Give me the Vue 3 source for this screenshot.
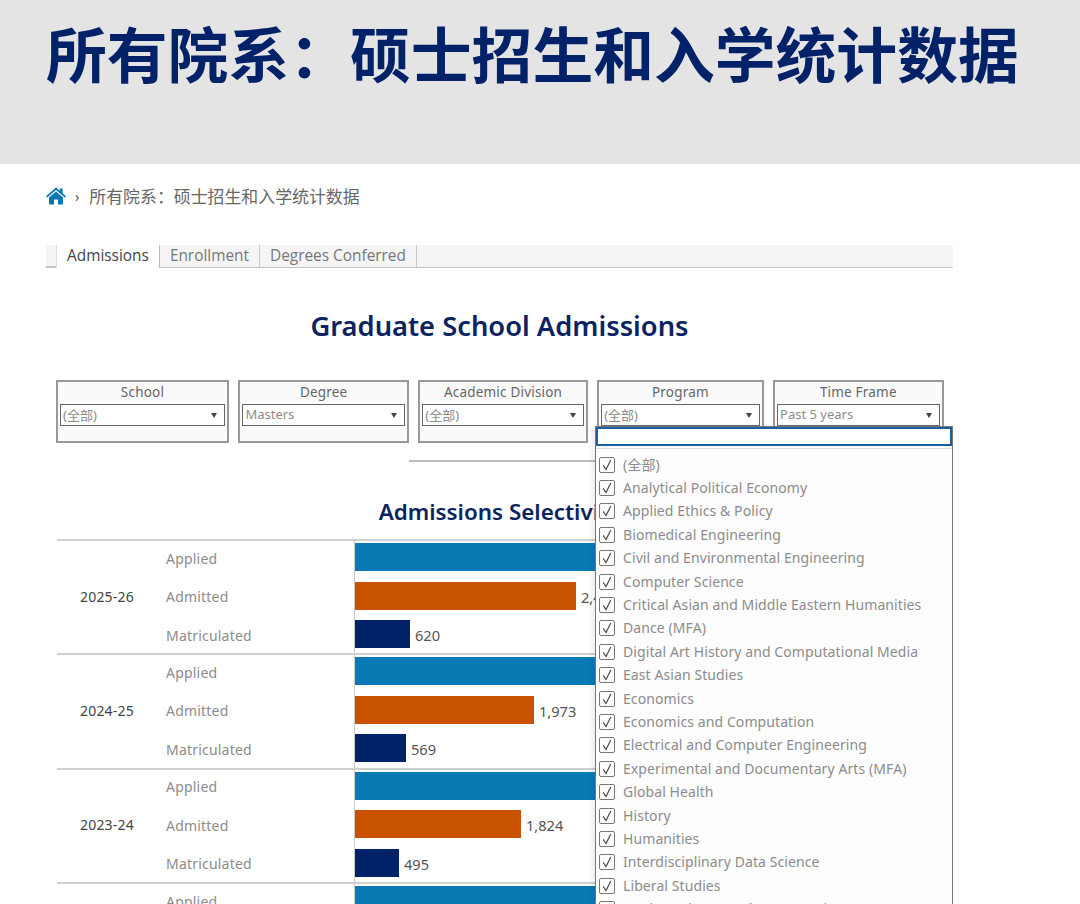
<script setup>
const filters = [
  { label: 'School', value: '(全部)', width: 173 },
  { label: 'Degree', value: 'Masters', width: 170.5 },
  { label: 'Academic Division', value: '(全部)', width: 169.5 },
  { label: 'Program', value: '(全部)', width: 166.5 },
  { label: 'Time Frame', value: 'Past 5 years', width: 170.5 }
]
const years = [
  { year: '2025-26', admitted: 221, admittedLabel: '2,450', mat: 55, matLabel: '620' },
  { year: '2024-25', admitted: 179, admittedLabel: '1,973', mat: 51, matLabel: '569' },
  { year: '2023-24', admitted: 166, admittedLabel: '1,824', mat: 44, matLabel: '495' },
  { year: '2022-23', admitted: 170, admittedLabel: '1,870', mat: 48, matLabel: '530' }
]
const programs = [
  '(全部)', 'Analytical Political Economy', 'Applied Ethics & Policy', 'Biomedical Engineering',
  'Civil and Environmental Engineering', 'Computer Science', 'Critical Asian and Middle Eastern Humanities',
  'Dance (MFA)', 'Digital Art History and Computational Media', 'East Asian Studies', 'Economics',
  'Economics and Computation', 'Electrical and Computer Engineering', 'Experimental and Documentary Arts (MFA)',
  'Global Health', 'History', 'Humanities', 'Interdisciplinary Data Science', 'Liberal Studies',
  'Marine Science and Conservation'
]
</script>

<template>
  <div class="page">
    <header class="hero">
      <h1>所有院系：硕士招生和入学统计数据</h1>
    </header>

    <nav class="crumbs">
      <svg class="home" viewBox="0 0 20 18" width="20" height="18">
        <path fill="#0577b1" d="M10 .6 0 9.2l1.2 1.4L10 3l8.8 7.6L20 9.2l-3.4-2.9V1.4h-2.8v2.5z" />
        <path fill="#0577b1" d="M10 4.6 3 10.6v6.8h5v-5h4v5h5v-6.8z" />
      </svg>
      <span class="sep">›</span>
      <span class="crumb">所有院系：硕士招生和入学统计数据</span>
    </nav>

    <main class="dash">
      <div class="tabs">
        <span class="tab-lead"></span>
        <span class="tab active">Admissions</span>
        <span class="tab">Enrollment</span>
        <span class="tab">Degrees Conferred</span>
      </div>

      <h2 class="title">Graduate School Admissions</h2>

      <div class="filters">
        <div v-for="f in filters" :key="f.label" class="filter" :style="{ width: f.width + 'px' }">
          <div class="filter-label">{{ f.label }}</div>
          <div class="select">
            <span>{{ f.value }}</span>
            <i class="caret"></i>
          </div>
        </div>
      </div>

      <div class="rule"></div>

      <h3 class="subtitle">Admissions Selectivity</h3>

      <div class="chart">
        <section v-for="y in years" :key="y.year" class="group">
          <div class="year">{{ y.year }}</div>
          <div class="rows">
            <div class="row">
              <span class="metric">Applied</span>
              <span class="bar applied"></span>
            </div>
            <div class="row">
              <span class="metric">Admitted</span>
              <span class="bar admitted" :style="{ width: y.admitted + 'px' }"></span>
              <span class="val">{{ y.admittedLabel }}</span>
            </div>
            <div class="row">
              <span class="metric">Matriculated</span>
              <span class="bar matriculated" :style="{ width: y.mat + 'px' }"></span>
              <span class="val">{{ y.matLabel }}</span>
            </div>
          </div>
        </section>
      </div>
    </main>

    <div class="dropdown">
      <div class="search"></div>
      <div class="divider"></div>
      <ul class="list">
        <li v-for="p in programs" :key="p">
          <span class="check">
            <svg viewBox="0 0 16 16" width="16" height="16">
              <path d="M4.2 8.4 7 12.6 11.8 3" fill="none" stroke="#444" stroke-width="1.1" />
            </svg>
          </span>
          <span class="prog">{{ p }}</span>
        </li>
      </ul>
    </div>
  </div>
</template>

<style>
html, body { margin: 0; background: #fff; }
</style>

<style scoped>
.page {
  position: relative;
  width: 1080px;
  height: 904px;
  overflow: hidden;
  background: #fff;
  font-family: "Noto Sans", "Noto Sans CJK SC", sans-serif;
}
.hero {
  height: 164px;
  background: #e4e4e4;
  padding: 0 0 0 46px;
  box-sizing: border-box;
}
.hero h1 {
  margin: 0;
  padding-top: 8px;
  font: 700 60.8px/88px "Noto Sans CJK SC", sans-serif;
  color: #012169;
  white-space: nowrap;
}
.crumbs {
  display: flex;
  align-items: center;
  height: 24px;
  margin: 20px 0 37px 46px;
}
.home { display: block; margin-top: -1px; }
.sep { margin: 0 10px 0 9px; color: #555; font-size: 14px; }
.crumb {
  font: 400 16.9px/24px "Noto Sans CJK SC", sans-serif;
  color: #666;
}
.dash { width: 907px; margin-left: 46px; }
.tabs {
  display: flex;
  height: 22px;
  background: #f5f5f5;
  border-bottom: 1px solid #c4c4c4;
  font-family: "Open Sans", sans-serif;
  font-size: 15.4px;
  line-height: 21px;
  color: #777;
}
.tab-lead {
  width: 10px;
  border-bottom: 1px solid #c4c4c4;
  height: 21px;
}
.tab {
  padding: 0 10px;
  border-right: 1px solid #c8c8c8;
  height: 22px;
  white-space: nowrap;
}
.tab.active {
  background: #fff;
  color: #444;
  height: 23px;
  border-left: 1px solid #ddd;
  border-right: 1px solid #bbb;
}
.title {
  margin: 38px 0 0;
  height: 40px;
  text-align: center;
  font: 600 27.3px/40px "Noto Sans", sans-serif;
  color: #0b2461;
}
.filters {
  display: flex;
  gap: 9.4px;
  margin: 34px 0 0 10px;
}
.filter {
  box-sizing: border-box;
  height: 63px;
  border: 2px solid #999;
  background: #fafafa;
  padding: 0 2px;
}
.filter-label {
  height: 22px;
  text-align: center;
  font-size: 13.5px;
  letter-spacing: .2px;
  line-height: 20px;
  color: #666;
  white-space: nowrap;
}
.select {
  display: flex;
  align-items: center;
  justify-content: space-between;
  height: 22px;
  box-sizing: border-box;
  border: 1px solid #666;
  background: #fff;
  padding: 0 7px 2px 2px;
  font-size: 13px;
  color: #8c8c8c;
}
.caret {
  width: 0;
  height: 0;
  margin-top: 2px;
  border-left: 3.5px solid transparent;
  border-right: 3.5px solid transparent;
  border-top: 5px solid #444;
}
.rule {
  height: 2px;
  background: #bbb;
  margin: 17px 0 0 363px;
  width: 400px;
}
.subtitle {
  margin: 35px 0 0;
  height: 30px;
  text-align: center;
  font: 600 22.4px/30px "Noto Sans", sans-serif;
  color: #0b2461;
  white-space: nowrap;
}
.chart { margin: 12px 0 0 11px; }
.group {
  display: flex;
  box-sizing: border-box;
  height: 114.4px;
  border-top: 2px solid #d0d0d0;
  background: linear-gradient(#ccc, #ccc) 297px 0 / 1px 100% no-repeat;
}
.year {
  width: 108px;
  flex: none;
  box-sizing: border-box;
  padding: 0 0 2px 23px;
  align-self: center;
  font-size: 14px;
  letter-spacing: .2px;
  color: #444;
}
.rows {
  flex: 1;
  display: flex;
  flex-direction: column;
  gap: 10.5px;
  padding-top: 2px;
}
.row {
  display: flex;
  align-items: center;
  height: 28px;
}
.metric {
  width: 189px;
  flex: none;
  margin: 2px 0 0 1px;
  font-size: 14px;
  letter-spacing: .2px;
  color: #8c8c8c;
}
.bar {
  display: block;
  height: 28px;
  flex: none;
}
.applied { width: 400px; background: #0a7ab5; }
.admitted { background: #c85200; }
.matriculated { background: #012169; }
.val {
  margin: 2px 0 0 5px;
  font-size: 14.6px;
  color: #555;
}
.dropdown {
  position: absolute;
  left: 595px;
  top: 426px;
  width: 358px;
  height: 500px;
  box-sizing: border-box;
  background: #fdfdfd;
  border: 1px solid #777;
  box-shadow: -3px 2px 6px rgba(0, 0, 0, .08);
}
.search {
  height: 19px;
  box-sizing: border-box;
  border: 2px solid #1a5ea6;
  background: #fff;
}
.divider {
  height: 1px;
  background: #ddd;
  margin-top: 2px;
}
.list {
  list-style: none;
  margin: 4px 0 0;
  padding: 0;
}
.list li {
  display: flex;
  align-items: center;
  height: 23.4px;
  padding-left: 3px;
}
.check {
  width: 16px;
  height: 16px;
  box-sizing: border-box;
  border: 1px solid #777;
  border-radius: 2px;
  flex: none;
  display: flex;
  align-items: center;
  justify-content: center;
}
.check svg { flex: none; }
.prog {
  margin-left: 8px;
  padding-bottom: 1px;
  font-size: 14px;
  letter-spacing: .09px;
  color: #8c8c8c;
  white-space: nowrap;
}
</style>
